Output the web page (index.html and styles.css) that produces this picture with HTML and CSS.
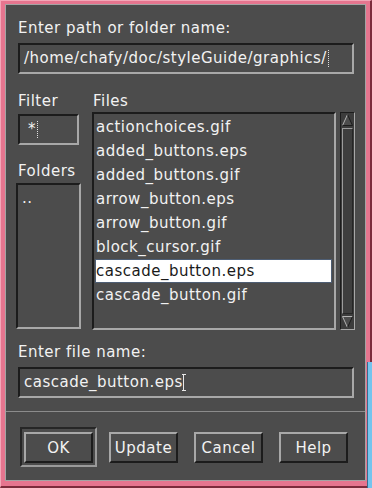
FILE: index.html
```html
<!DOCTYPE html>
<html lang="en">
<head>
    <meta charset="utf-8" />
    <title>File Selection</title>
    <link rel="stylesheet" href="styles.css">
</head>
<body>
    <div class="frame">
        <div class="dialog">
            <div class="work">
                <div class="label">Enter path or folder name:</div>
                <div class="field">/home/chafy/doc/styleGuide/graphics/<span class="caret dotted"></span></div>

                <div class="browser">
                    <div class="side">
                        <div class="label label-col">Filter</div>
                        <div class="field field-filter">*<span class="caret dotted"></span></div>
                        <div class="label label-col label-folders">Folders</div>
                        <ul class="list list-folders">
                            <li>..</li>
                        </ul>
                    </div>
                    <div class="main">
                        <div class="label label-files">Files</div>
                        <div class="files">
                            <ul class="list list-files">
                                <li>actionchoices.gif</li>
                                <li>added_buttons.eps</li>
                                <li>added_buttons.gif</li>
                                <li>arrow_button.eps</li>
                                <li>arrow_button.gif</li>
                                <li>block_cursor.gif</li>
                                <li class="selected">cascade_button.eps</li>
                                <li>cascade_button.gif</li>
                            </ul>
                            <div class="scrollbar">
                                <svg class="arrow" width="11" height="12" viewBox="0 0 11 12">
                                    <polygon points="5.5,0.5 0.5,11.5 10.5,11.5" fill="#4c4c4c" />
                                    <polyline points="0.5,11.5 5.5,0.5" fill="none" stroke="#b4b4b4" />
                                    <polyline points="5.5,0.5 10.5,11.5 0.5,11.5" fill="none" stroke="#1c1c1c" />
                                </svg>
                                <div class="thumb"></div>
                                <svg class="arrow" width="11" height="12" viewBox="0 0 11 12">
                                    <polygon points="0.5,0.5 10.5,0.5 5.5,11.5" fill="#4c4c4c" />
                                    <polyline points="5.5,11.5 0.5,0.5 10.5,0.5" fill="none" stroke="#b4b4b4" />
                                    <polyline points="10.5,0.5 5.5,11.5" fill="none" stroke="#1c1c1c" />
                                </svg>
                            </div>
                        </div>
                    </div>
                </div>

                <div class="label label-name">Enter file name:</div>
                <div class="field">cascade_button.eps<span class="ibeam"></span></div>
            </div>

            <div class="actions">
                <div class="slot default"><button class="btn">OK</button></div>
                <div class="slot"><button class="btn">Update</button></div>
                <div class="slot"><button class="btn">Cancel</button></div>
                <div class="slot"><button class="btn">Help</button></div>
            </div>
        </div>
        <div class="peek"></div>
    </div>
</body>
</html>
```

FILE: styles.css
```css
body {
    margin: 0;
    background: #e6758f;
    font-family: "DejaVu Sans", "Liberation Sans", sans-serif;
    font-size: 15px;
    letter-spacing: 0.5px;
    color: #f2f2f2;
}

.frame {
    position: relative;
    width: 372px;
    height: 488px;
    box-sizing: border-box;
    background: #e6758f;
    border-top: 1px solid #f3a7b8;
    border-left: 1px solid #f3a7b8;
    border-right: 2px solid #7c2c3c;
    border-bottom: 2px solid #7c2c3c;
    padding: 3px 4px 5px 4px;
}

.dialog {
    height: 477px;
    box-sizing: border-box;
    background: #4c4c4c;
    border: 1px solid #a4a4a4;
    display: flex;
    flex-direction: column;
}

.work {
    padding: 14px 11px 13px 12px;
}

.label {
    line-height: 18px;
    height: 18px;
    white-space: nowrap;
}

.field {
    height: 31px;
    box-sizing: border-box;
    margin-top: 6px;
    padding-left: 4px;
    line-height: 27px;
    white-space: nowrap;
    overflow: hidden;
    border-style: solid;
    border-width: 2px;
    border-color: #1c1c1c #a8a8a8 #a8a8a8 #1c1c1c;
}

.caret {
    display: inline-block;
    width: 0;
    height: 17px;
    margin-left: 1px;
    vertical-align: -4px;
}

    .caret.dotted {
        border-left: 1px dotted #e0e0e0;
    }

.ibeam {
    display: inline-block;
    width: 4px;
    height: 17px;
    box-sizing: border-box;
    margin-left: -1px;
    vertical-align: -4px;
    border-top: 1px solid #e8e8e8;
    border-bottom: 1px solid #e8e8e8;
    background: linear-gradient(to right, transparent 1px, #e8e8e8 1px, #e8e8e8 2px, transparent 2px);
}

.browser {
    display: flex;
    gap: 11px;
    margin: 18px 0 0 -2px;
    width: 339px;
}

.side {
    width: 65px;
    flex: none;
}

.main {
    flex: 1;
}

.label-col {
    padding-left: 2px;
}

.label-files {
    padding-left: 1px;
    margin-bottom: 2px;
}

.field-filter {
    width: 61px;
    margin: 4px 0 0 2px;
    padding-left: 8px;
}

.label-folders {
    margin: 17px 0 3px;
}

.list {
    list-style: none;
    margin: 0;
    padding: 1px 0 0;
    box-sizing: border-box;
    border-style: solid;
    border-width: 2px;
    border-color: #1c1c1c #a8a8a8 #a8a8a8 #1c1c1c;
}

    .list li {
        margin: 0 2px 0 1px;
        border: 1px solid transparent;
        line-height: 22px;
        white-space: nowrap;
    }

        .list li.selected {
            background: #ffffff;
            color: #1a1a1a;
            border-color: #4e5e74;
        }

.list-folders {
    height: 146px;
}

    .list-folders li {
        padding-left: 2px;
    }

.files {
    display: flex;
    gap: 4px;
    height: 218px;
}

.list-files {
    flex: 1;
    height: 218px;
}

.scrollbar {
    width: 15px;
    flex: none;
    box-sizing: border-box;
    border-style: solid;
    border-width: 1px;
    border-color: #1c1c1c #a8a8a8 #a8a8a8 #1c1c1c;
    background: #3c3c3c;
    padding: 1px 1px 1px 1px;
    display: flex;
    flex-direction: column;
    align-items: center;
}

.arrow {
    display: block;
    flex: none;
}

.thumb {
    flex: 1;
    align-self: stretch;
    margin: 2px 0;
    border-style: solid;
    border-width: 1px;
    border-color: #9c9c9c #262626 #262626 #9c9c9c;
    background: #3e3e3e;
}

.label-name {
    margin-top: 13px;
}

.actions {
    border-top: 1px solid #8c8c8c;
    padding: 15px 0 13px 14px;
    display: flex;
    gap: 8px;
}

.slot {
    width: 77px;
    height: 40px;
    box-sizing: border-box;
    padding: 3px 2px 2px;
    border: 2px solid transparent;
}

    .slot.default {
        border-color: #262626 #9a9a9a #9a9a9a #262626;
    }

.btn {
    display: block;
    width: 69px;
    height: 31px;
    margin: 0;
    padding: 0;
    background: #4c4c4c;
    color: #f2f2f2;
    font-family: inherit;
    font-size: 15px;
    letter-spacing: 0.5px;
    border-style: solid;
    border-width: 2px;
    border-color: #a8a8a8 #1c1c1c #1c1c1c #a8a8a8;
}

.peek {
    position: absolute;
    right: -2px;
    top: 361px;
    width: 4px;
    height: 127px;
    background: #74c4ee;
    border-left: 1px solid #3a6c8c;
}
```
